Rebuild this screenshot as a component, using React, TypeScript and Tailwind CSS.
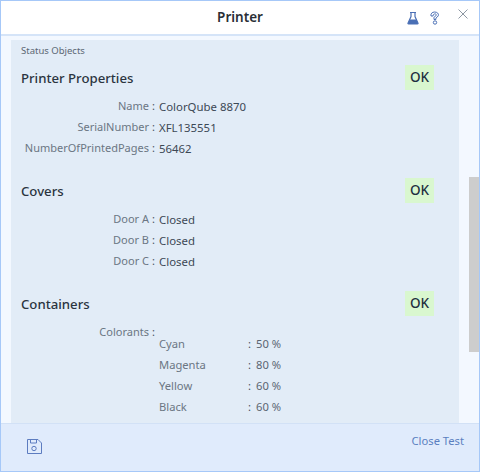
const rows1 = [
  { label: "Name", value: "ColorQube 8870" },
  { label: "SerialNumber", value: "XFL135551" },
  { label: "NumberOfPrintedPages", value: "56462" },
];

const rows2 = [
  { label: "Door A", value: "Closed" },
  { label: "Door B", value: "Closed" },
  { label: "Door C", value: "Closed" },
];

const colorants = [
  { name: "Cyan", level: "50 %" },
  { name: "Magenta", level: "80 %" },
  { name: "Yellow", level: "60 %" },
  { name: "Black", level: "60 %" },
];

const Heading = ({ title }: { title: string }) => (
  <div className="flex items-center justify-between h-[25px] pr-[15px]">
    <h3 className="pt-[2px] text-[13.200px] font-medium text-[#2b3440]">{title}</h3>
    <span className="flex items-center justify-center w-[29px] h-[25px] bg-[#d9f7cf] text-[13.500px] font-medium text-[#1f3040]">OK</span>
  </div>
);

const Row = ({ label, value }: { label: string; value: string }) => (
  <div className="flex h-[21px] items-center text-[11px]">
    <span className="w-[128px] shrink-0 text-right whitespace-nowrap text-[#6b7683]">{label}</span>
    <span className="w-[10px] shrink-0 pl-[3px] text-[#47525e]">:</span>
    <span className="text-[11.400px] text-[#3c4855]">{value}</span>
  </div>
);

export default function App() {
  return (
    <div className="w-[480px] h-[472px] flex flex-col overflow-hidden border border-[#a6c8f8] bg-white font-['Noto_Sans',sans-serif]">
      {/* Title bar */}
      <div className="relative flex items-center justify-center h-[35px] shrink-0 bg-white border-b-2 border-[#d5e4f8]">
        <span className="text-[13.500px] font-semibold text-[#2a2f36]">Printer</span>
        <svg className="absolute left-[405px] top-[10px]" width="14" height="14" viewBox="0 0 14 14">
          <path d="M4 1.500h6M5 1.500v4L2 12.200c-.2.500 0 .8.500.8h9c.5 0 .7-.3.5-.8L9 5.500v-4" fill="none" stroke="#4a6fb5" strokeWidth="1.200" />
          <path d="M3.600 8.500h6.800l1.600 4.500H2z" fill="#4a6fb5" />
        </svg>
        <svg className="absolute left-[428px] top-[10px]" width="12" height="14" viewBox="0 0 12 14">
          <path d="M2 5c-.6-2.300 1.300-4 3.600-4 2.600 0 4.400 1.700 3.700 3.700-.4 1.200-1.700 1.700-2.400 2.400v1.400H5V6.400c.4-1.100 2.200-1.400 2.400-2.300C7.500 3.300 6.500 2.800 5.600 2.900 4.700 3 4.100 3.800 4.100 5z" fill="none" stroke="#4a6fb5" strokeWidth="1" />
          <circle cx="6" cy="11.500" r="1.700" fill="none" stroke="#4a6fb5" strokeWidth="1" />
        </svg>
        <svg className="absolute left-[457px] top-[8px]" width="10" height="10" viewBox="0 0 10 10">
          <path d="M.5.5l9 9M9.500.5l-9 9" stroke="#8d97a3" strokeWidth="1" fill="none" />
        </svg>
      </div>

      {/* Body */}
      <div className="flex flex-1 min-h-0 bg-[#f3f8ff] pt-[4px] pl-[10px]">
        <div className="w-[448px] bg-[#e2ecf7] px-[10px] overflow-hidden">
          <p className="pt-[3px] text-[9.500px] leading-[15px] text-[#5c6773]">Status Objects</p>

          <div className="mt-[7px]">
            <Heading title="Printer Properties" />
            <div className="mt-[6px]">
              {rows1.map((row) => (
                <Row key={row.label} label={row.label} value={row.value} />
              ))}
            </div>
          </div>

          <div className="mt-[19px]">
            <Heading title="Covers" />
            <div className="mt-[6px]">
              {rows2.map((row) => (
                <Row key={row.label} label={row.label} value={row.value} />
              ))}
            </div>
          </div>

          <div className="mt-[19px]">
            <Heading title="Containers" />
            <div className="mt-[6px] h-[12px]">
              <Row label="Colorants" value="" />
            </div>
            {colorants.map((c) => (
              <div key={c.name} className="flex h-[21px] items-center text-[11.200px] pl-[138px]">
                <span className="w-[89px] text-[#6b7683]">{c.name}</span>
                <span className="w-[8px] text-[#47525e]">:</span>
                <span className="text-[#5a6572]">{c.level}</span>
              </div>
            ))}
          </div>
        </div>

        {/* Scrollbar */}
        <div className="ml-[10px] w-[10px] flex flex-col">
          <div className="h-[137px]" />
          <div className="h-[175px] bg-[#cdcdcd]" />
        </div>
      </div>

      {/* Footer */}
      <div className="flex items-start justify-between h-[48px] shrink-0 bg-[#e0ebfc] border-t border-[#d2e1f6] pl-[26px] pr-[15px] pt-[15px]">
        <svg width="15" height="15" viewBox="0 0 15 15" fill="none" stroke="#5d7cc0" strokeWidth="1">
          <path d="M.5.500h10.500l3.500 3.500v10.500H.5z" />
          <path d="M3.500.500v3.500h6V.5" />
          <circle cx="7" cy="9.500" r="2.200" />
        </svg>
        <span className="text-[11.200px] leading-[14px] -mt-[5px] text-[#5a7fc0]">Close Test</span>
      </div>
    </div>
  );
}
